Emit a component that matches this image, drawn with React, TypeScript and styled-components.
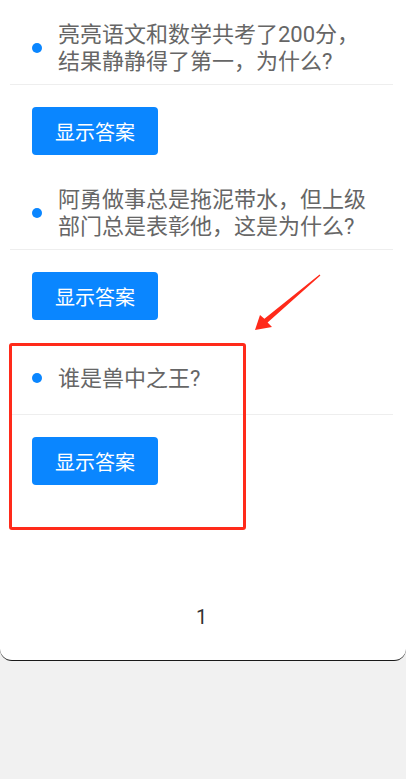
import styled, { createGlobalStyle } from "styled-components";

const questions = [
  { id: 1, text: "亮亮语文和数学共考了200分，结果静静得了第一，为什么?" },
  { id: 2, text: "阿勇做事总是拖泥带水，但上级部门总是表彰他，这是为什么?" },
  { id: 3, text: "谁是兽中之王?" },
];

export default function App() {
  return (
    <Page>
      <GlobalStyle />
      <Card>
        {questions.map((q) => (
          <Item key={q.id}>
            <Header>
              <Dot />
              <Question>{q.text}</Question>
            </Header>
            <Body>
              <AnswerButton type="button">显示答案</AnswerButton>
            </Body>
          </Item>
        ))}
        <Pagination>1</Pagination>
      </Card>

      {/* annotation drawn over the screenshot */}
      <Highlight />
      <Arrow viewBox="0 0 75 65" width="75" height="65">
        <polygon
          points="69.6,4.6 14.4,48.8 10,45 5,60 22,57 17.6,52.6 70.4,5.4"
          fill="#ff2a1a"
        />
      </Arrow>
    </Page>
  );
}

const GlobalStyle = createGlobalStyle`
  html, body {
    margin: 0;
    padding: 0;
    background: #f1f1f1;
  }
  body {
    font-family: "Roboto", "Noto Sans CJK SC", sans-serif;
  }
`;

const Page = styled.div`
  position: relative;
  width: 406px;
  min-height: 779px;
  background: #f1f1f1;
`;

const Card = styled.div`
  padding: 12px 13px 23px 10px;
  background: #fff;
  border-bottom: 1.5px solid #1a1a1a;
  border-radius: 0 0 12px 12px;
`;

const Item = styled.div`
  display: flex;
  flex-direction: column;
`;

const Header = styled.div`
  height: 72px;
  padding: 0 20px 0 22px;
  display: flex;
  align-items: center;
  gap: 16px;
  border-bottom: 1px solid #eeeeee;
`;

const Dot = styled.span`
  flex: none;
  width: 10px;
  height: 10px;
  border-radius: 50%;
  background: #0a86ff;
`;

const Question = styled.div`
  flex: 1;
  font-size: 22px;
  line-height: 27px;
  color: #666;
`;

const Body = styled.div`
  padding: 22px 22px;
`;

const AnswerButton = styled.button`
  display: block;
  width: 126px;
  height: 48px;
  padding: 0;
  border: none;
  border-radius: 4px;
  background: #0a86ff;
  color: #fff;
  font-family: "Roboto", "Noto Sans CJK SC", sans-serif;
  font-size: 20px;
`;

const Pagination = styled.div`
  margin-top: 90px;
  height: 40px;
  line-height: 40px;
  text-align: center;
  font-size: 20px;
  color: #333;
`;

const Highlight = styled.div`
  position: absolute;
  left: 9px;
  top: 343px;
  width: 231px;
  height: 181px;
  border: 3px solid #ff2a1a;
  border-radius: 3px;
`;

const Arrow = styled.svg`
  position: absolute;
  left: 250px;
  top: 270px;
`;
